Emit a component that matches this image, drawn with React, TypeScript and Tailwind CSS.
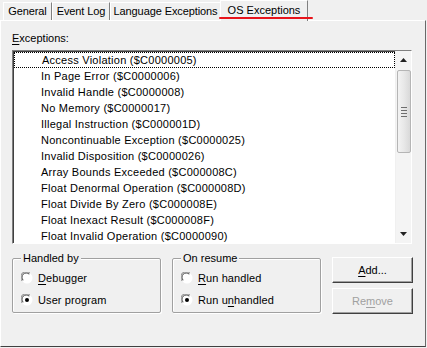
import React from 'react';

const font = { fontFamily: '"Liberation Sans", Arial, sans-serif' };

const exceptions = [
  'Access Violation ($C0000005)',
  'In Page Error ($C0000006)',
  'Invalid Handle ($C0000008)',
  'No Memory ($C0000017)',
  'Illegal Instruction ($C000001D)',
  'Noncontinuable Exception ($C0000025)',
  'Invalid Disposition ($C0000026)',
  'Array Bounds Exceeded ($C000008C)',
  'Float Denormal Operation ($C000008D)',
  'Float Divide By Zero ($C000008E)',
  'Float Inexact Result ($C000008F)',
  'Float Invalid Operation ($C0000090)',
];

const tabs = [
  { label: 'General', w: 'w-[49px]' },
  { label: 'Event Log', w: 'w-[58px]' },
  { label: 'Language Exceptions', w: 'w-[111px]' },
];

const Radio = ({ checked }: { checked?: boolean }) => (
  <svg width="12" height="12" viewBox="0 0 12 12" className="shrink-0">
    <circle cx="6" cy="6" r="5.5" fill="#ffffff" />
    <path d="M1.2 9 A5 5 0 0 1 9 1.2" fill="none" stroke="#808080" strokeWidth="1" />
    <path d="M2.2 8.2 A4 4 0 0 1 8.2 2.2" fill="none" stroke="#404040" strokeWidth="1" />
    {checked && <circle cx="6" cy="6" r="2" fill="#000000" />}
  </svg>
);

const Group = ({ title, items }: { title: string; items: { label: React.ReactNode; checked?: boolean }[] }) => (
  <div className="relative w-[149px] h-[55px] border border-[#a0a0a0] shadow-[inset_1px_1px_0_#ffffff,1px_1px_0_#ffffff] rounded-[2px]">
    <span className="absolute left-[8px] -top-[7px] bg-[#f0f0f0] px-[2px] leading-[13px]">{title}</span>
    <div className="flex flex-col gap-[10px] pl-[8px] pt-[13px]">
      {items.map((it, i) => (
        <div key={i} className="flex items-center gap-[5px] h-[12px]">
          <Radio checked={it.checked} />
          <span className="leading-[12px] tracking-[0.1px]">{it.label}</span>
        </div>
      ))}
    </div>
  </div>
);

const Button = ({ children, disabled }: { children: React.ReactNode; disabled?: boolean }) => (
  <div
    className={`w-[81px] h-[26px] flex items-center justify-center border border-t-white border-l-white border-r-[#404040] border-b-[#404040] shadow-[inset_-1px_-1px_0_#a0a0a0] ${
      disabled ? 'text-[#a0a0a0]' : 'text-black'
    }`}
  >
    {children}
  </div>
);

export default function App() {
  return (
    <div className="w-[427px] h-[348px] bg-[#f0f0f0] text-[11px] text-black relative overflow-hidden" style={font}>
      {/* tabs */}
      <div className="flex items-end h-[21px] pl-[3px] relative z-10">
        {tabs.map((t) => (
          <div
            key={t.label}
            className={`${t.w} h-[18px] flex items-center justify-center border-l border-t border-white border-r border-r-[#808080] mb-[1px] leading-[13px] tracking-[-0.1px] whitespace-nowrap`}
          >
            {t.label}
          </div>
        ))}
        <div className="w-[88px] h-[21px] flex items-center justify-center border-l border-t border-white border-r border-r-[#808080] bg-[#f0f0f0] -ml-[1px] pb-[2px] leading-[13px]">
          OS Exceptions
        </div>
        <div className="absolute left-[219px] top-[17px] w-[94px] h-[2px] bg-[#e8141b] rounded-full" />
      </div>

      {/* panel */}
      <div className="absolute left-0 top-[20px] w-[426px] h-[327px] border-t border-l border-white border-r border-r-[#696969] border-b border-b-[#404040]">
        <div className="pl-[11px] pt-[11px]">
          <div className="leading-[13px] mb-[5px]">
            <span className="underline underline-offset-2">E</span>xceptions:
          </div>
          <div className="w-[400px] h-[194px] bg-white border border-t-[#808080] border-l-[#808080] border-r-white border-b-white shadow-[inset_1px_1px_0_#404040] flex">
            <div className="flex-1 pt-[1px] pl-[1px]">
              {exceptions.map((e, i) => (
                <div
                  key={e}
                  className={`h-[16px] flex items-center pl-[27px] leading-[13px] tracking-[0.25px] ${
                    i === 0 ? 'border border-dotted border-black pl-[26px]' : ''
                  }`}
                >
                  {e}
                </div>
              ))}
            </div>
            {/* scrollbar */}
            <div className="w-[16px] h-full bg-[#f4f4f4] flex flex-col items-center pt-[1px] pb-[1px] border-l border-[#f0f0f0]">
              <div className="w-[15px] h-[16px] flex items-center justify-center">
                <svg width="7" height="4" viewBox="0 0 7 4">
                  <path d="M0 4 L3.5 0 L7 4 Z" fill="#222222" />
                </svg>
              </div>
              <div className="w-[14px] h-[83px] mt-[2px] rounded-[2px] border border-[#b5b5b5] bg-gradient-to-r from-[#f3f3f3] via-[#e8e8e8] to-[#d9d9d9] flex flex-col items-center justify-center gap-[2px]">
                <div className="w-[6px] h-px bg-[#6d6d6d]" />
                <div className="w-[6px] h-px bg-[#6d6d6d]" />
                <div className="w-[6px] h-px bg-[#6d6d6d]" />
                <div className="w-[6px] h-px bg-[#6d6d6d]" />
              </div>
              <div className="flex-1" />
              <div className="w-[15px] h-[16px] flex items-center justify-center">
                <svg width="7" height="4" viewBox="0 0 7 4">
                  <path d="M0 0 L7 0 L3.5 4 Z" fill="#222222" />
                </svg>
              </div>
            </div>
          </div>

          <div className="flex items-start mt-[14px] gap-[11px]">
            <Group
              title="Handled by"
              items={[
                { label: <><span className="underline underline-offset-2">D</span>ebugger</> },
                { label: 'User program', checked: true },
              ]}
            />
            <Group
              title="On resume"
              items={[
                { label: <><span className="underline underline-offset-2">R</span>un handled</> },
                { label: <>Run u<span className="underline underline-offset-2">n</span>handled</>, checked: true },
              ]}
            />
            <div className="flex flex-col gap-[5px] -mt-[1px]">
              <Button>
                <span className="underline underline-offset-2">A</span>dd...
              </Button>
              <Button disabled>
                Re<span className="underline underline-offset-2">m</span>ove
              </Button>
            </div>
          </div>
        </div>
      </div>
    </div>
  );
}
